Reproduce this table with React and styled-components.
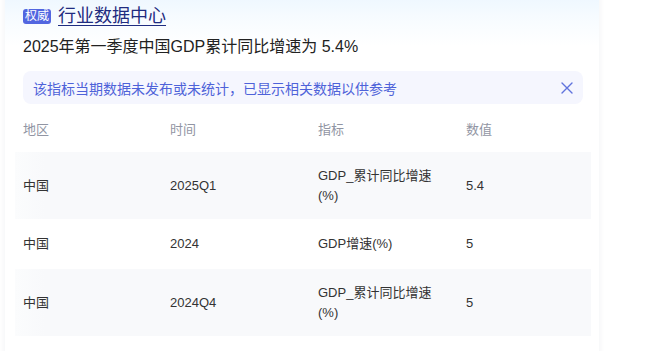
import React from "react";
import styled, { createGlobalStyle } from "styled-components";

const GlobalStyle = createGlobalStyle`
  html, body {
    margin: 0;
    padding: 0;
    background: #fff;
    font-family: "Liberation Sans", Arial, "Noto Sans CJK SC", sans-serif;
    overflow: hidden;
  }
`;

const rows = [
  { area: "中国", time: "2025Q1", name: "GDP_累计同比增速(%)", value: "5.4", striped: true },
  { area: "中国", time: "2024", name: "GDP增速(%)", value: "5" },
  { area: "中国", time: "2024Q4", name: "GDP_累计同比增速(%)", value: "5", striped: true },
];

const Page = styled.div`
  padding-left: 5px;
  height: 351px;
  overflow: hidden;
`;

const Card = styled.div`
  width: 594px;
  margin-top: -14px;
  padding: 15px 0 40px;
  border-radius: 12px;
  background: linear-gradient(180deg, #e9f5ff 0px, #f6fbff 30px, #ffffff 60px);
  box-shadow: 0 0 6px rgba(30, 40, 80, 0.07);
`;

const TitleRow = styled.div`
  display: flex;
  align-items: center;
  gap: 7px;
  padding: 2px 18px 0;
  height: 26px;
`;

const Badge = styled.span`
  display: inline-flex;
  align-items: center;
  justify-content: center;
  height: 15px;
  padding: 0 2px;
  border-radius: 3px;
  background: #5266e0;
  color: #fff;
  font-size: 12px;
  line-height: 15px;
`;

const Title = styled.a`
  font-size: 18px;
  line-height: 24px;
  color: #1f2c80;
  text-decoration: underline;
  text-underline-offset: 3px;
  text-decoration-thickness: 1px;
`;

const Summary = styled.div`
  padding: 7px 18px 0;
  font-size: 16px;
  line-height: 22px;
  color: #222;
`;

const Notice = styled.div`
  display: flex;
  align-items: center;
  justify-content: space-between;
  margin: 13px 16px 0 18px;
  height: 33px;
  padding: 0 10px;
  border-radius: 8px;
  background: #f5f6fe;
  color: #4e62d9;
  font-size: 14px;
`;

const CloseIcon = () => (
  <svg width="12" height="12" viewBox="0 0 12 12">
    <path d="M1 1L11 11M11 1L1 11" stroke="#6073dd" strokeWidth="1.4" strokeLinecap="round" />
  </svg>
);

const Table = styled.div`
  margin: 4px 0 0 10px;
  width: 576px;
`;

const Row = styled.div`
  display: grid;
  grid-template-columns: 147px 148px 148px 1fr;
  align-items: center;
  min-height: ${(p) => (p.head ? "44px" : "50px")};
  padding: ${(p) => (p.head ? "0" : "14px 0")};
  box-sizing: border-box;
  background: ${(p) =>
    p.striped ? "linear-gradient(90deg, #fbfcfd 0px, #f8f9fb 30px)" : "transparent"};
  color: ${(p) => (p.head ? "#9195a3" : "#333")};
  font-size: 13px;
  line-height: 19.5px;
`;

const Cell = styled.div`
  padding-left: 8px;
  max-width: ${(p) => (p.narrow ? "114px" : "none")};
`;

export default function App() {
  return (
    <Page>
      <GlobalStyle />
      <Card>
        <TitleRow>
          <Badge>权威</Badge>
          <Title>行业数据中心</Title>
        </TitleRow>
        <Summary>2025年第一季度中国GDP累计同比增速为 5.4%</Summary>
        <Notice>
          <span>该指标当期数据未发布或未统计，已显示相关数据以供参考</span>
          <CloseIcon />
        </Notice>
        <Table>
          <Row head>
            <Cell>地区</Cell>
            <Cell>时间</Cell>
            <Cell>指标</Cell>
            <Cell>数值</Cell>
          </Row>
          {rows.map((r, i) => (
            <Row key={i} striped={r.striped}>
              <Cell>{r.area}</Cell>
              <Cell>{r.time}</Cell>
              <Cell narrow>{r.name}</Cell>
              <Cell>{r.value}</Cell>
            </Row>
          ))}
        </Table>
      </Card>
    </Page>
  );
}
